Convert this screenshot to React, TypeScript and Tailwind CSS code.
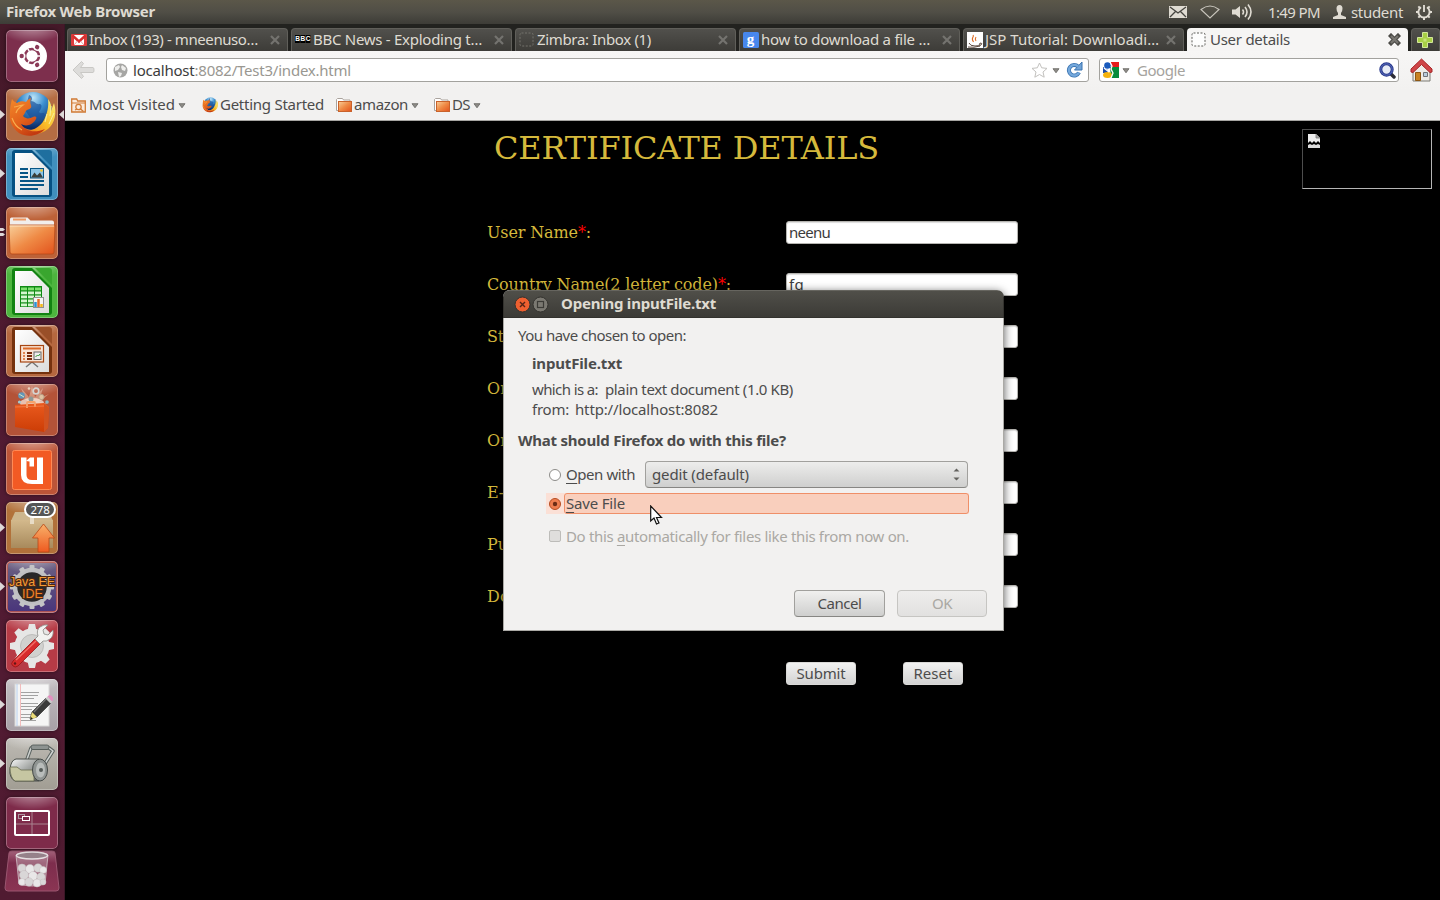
import { useLayoutEffect, useRef, useState, type ReactNode } from "react";

/** Single-line text whose tracking is adjusted so that it fills `w` pixels. */
function T({ w, className = "", children }: { w: number; className?: string; children: ReactNode }) {
  const ref = useRef<HTMLSpanElement>(null);
  const [spacing, setSpacing] = useState(0);
  useLayoutEffect(() => {
    const el = ref.current;
    if (!el) return;
    const n = (el.textContent || "").length;
    setSpacing((w - el.getBoundingClientRect().width) / n);
  }, [w]);
  return (
    <span ref={ref} className={`inline-block shrink-0 self-start whitespace-pre ${className}`} style={{ letterSpacing: spacing }}>
      {children}
    </span>
  );
}

function Tile({ className, children, left, right, dots }: { className: string; children: ReactNode; left?: boolean; right?: boolean; dots?: boolean }) {
  return (
    <div className="relative flex h-[52px] w-full shrink-0 pl-[6px]">
      <div className={`h-[52px] w-[52px] overflow-hidden rounded-[5px] shadow-[0_0_4px_rgba(0,0,0,0.5)] ${className}`}>
        <svg width="52" height="52" viewBox="0 0 52 52">
          <ellipse cx="26" cy="0" rx="30" ry="16" fill="url(#gloss)" />
          {children}
          <rect x=".5" y=".5" width="51" height="51" rx="4.5" fill="none" stroke="#fff" strokeOpacity=".28" />
        </svg>
      </div>
      {left && (
        <svg className="absolute top-[21px] left-0" width="5" height="9" viewBox="0 0 5 9"><path d="M0 0 5 4.5 0 9Z" fill="#ddd8d8" /></svg>
      )}
      {dots && (
        <svg className="absolute top-[21px] left-0" width="5" height="9" viewBox="0 0 5 9"><path d="M0 0h3l2 1.5L3 3H0ZM0 5h3l2 1.5L3 8H0Z" fill="#ddd8d8" /></svg>
      )}
      {right && (
        <svg className="absolute top-[21px] right-0" width="5" height="9" viewBox="0 0 5 9"><path d="M5 0 0 4.5 5 9Z" fill="#ddd8d8" /></svg>
      )}
    </div>
  );
}

function Defs() {
  return (
    <svg width="0" height="0" className="absolute">
      <defs>
        <radialGradient id="gloss" cx=".5" cy=".3" r=".6"><stop offset="0" stopColor="#fff" stopOpacity=".55" /><stop offset="1" stopColor="#fff" stopOpacity="0" /></radialGradient>
        <radialGradient id="globe" cx=".5" cy=".15" r=".8"><stop offset="0" stopColor="#bfe6f8" /><stop offset=".4" stopColor="#3c8fd0" /><stop offset="1" stopColor="#0b2a66" /></radialGradient>
        <linearGradient id="fox" x1="0" y1="0" x2=".6" y2="1"><stop offset="0" stopColor="#f28a2b" /><stop offset=".6" stopColor="#e2601b" /><stop offset="1" stopColor="#c23a10" /></linearGradient>
        <linearGradient id="tail" x1="1" y1="0" x2="0" y2="1"><stop offset="0" stopColor="#fdf07a" /><stop offset=".5" stopColor="#f9bd28" /><stop offset="1" stopColor="#ea6a18" /></linearGradient>
        <linearGradient id="paper" x1="0" y1="0" x2="1" y2="1"><stop offset="0" stopColor="#fff" /><stop offset="1" stopColor="#dcdcdc" /></linearGradient>
        <linearGradient id="folder" x1="0" y1="0" x2="1" y2="1"><stop offset="0" stopColor="#f8cf9a" /><stop offset=".5" stopColor="#ef8a45" /><stop offset="1" stopColor="#e2521c" /></linearGradient>
        <linearGradient id="bag" x1="0" y1="0" x2="0" y2="1"><stop offset="0" stopColor="#ea5a1e" /><stop offset="1" stopColor="#cc3d06" /></linearGradient>
        <linearGradient id="box" x1="0" y1="0" x2="0" y2="1"><stop offset="0" stopColor="#d3b98c" /><stop offset="1" stopColor="#a88a5c" /></linearGradient>
        <linearGradient id="up" x1="0" y1="0" x2="0" y2="1"><stop offset="0" stopColor="#f9b16a" /><stop offset="1" stopColor="#ee5a20" /></linearGradient>
        <linearGradient id="metal" x1="0" y1="0" x2="1" y2="1"><stop offset="0" stopColor="#fafafa" /><stop offset=".5" stopColor="#a5a8a6" /><stop offset="1" stopColor="#5c5f5d" /></linearGradient>
        <linearGradient id="trashbg" x1="0" y1="0" x2="0" y2="1"><stop offset="0" stopColor="#a5637c" /><stop offset=".3" stopColor="#7d2d4d" /><stop offset="1" stopColor="#8b3553" /></linearGradient>
      </defs>
    </svg>
  );
}

function FoxArt() {
  return (
    <g>
      <circle cx="27" cy="22" r="19" fill="url(#globe)" />
      <path d="M23 6c3 1 4 4 2 6 4 0 5 4 9 3 3 1 1 5-1 8 2 3 5-1 6 3-3 5-8 8-12 7l-8-12Z" fill="#1a4f96" opacity=".65" />
      <path d="M42 10c3 4 4 8 3 12l3-8c3 10 1 20-6 26-7 6-18 7-26 3 9-1 18-4 22-12 3-6 5-13 4-21Z" fill="url(#tail)" />
      <path d="m45 17-1 10m-3-2-2 8m9-9-5 11" stroke="#f7ef9b" strokeWidth="1" fill="none" />
      <path d="M6 10c1 2 3 3 5 4 3-2 6-2 9-1 1-2 3-3 5-4-1 3-1 5 0 7 1 3-1 4-4 5-2 1-2 4-4 6 4 4 7 2 10 1 3-1 4 0 3 2-3 6-10 8-15 5 5 8 14 9 24 5-6 7-18 9-26 4C5 38 3 31 4 23c0-5 1-9 2-13Z" fill="url(#fox)" />
      <path d="M8 18c3 0 6-2 9-2-3 2-6 4-7 8M6 29c2 6 6 10 10 12" fill="none" stroke="#f9ad4e" strokeWidth="1.2" />
    </g>
  );
}

function Doc({ dark, light, children }: { dark: string; light: string; children: ReactNode }) {
  return (
    <g>
      <path d="M6 5q0-3 3-3h17l20 20v24q0 3-3 3H9q-3 0-3-3Z" fill={dark} />
      <path d="M29 2h14q3 0 3 3v14Z" fill={light} />
      <path d="M9 5h17l17 17v25H9Z" fill="url(#paper)" />
      {children}
    </g>
  );
}

const teeth = [0, 30, 60, 90, 120, 150, 180, 210, 240, 270, 300, 330];
const bigTeeth = [0, 45, 90, 135, 180, 225, 270, 315];

function Launcher() {
  return (
    <aside className="flex w-[65px] shrink-0 flex-col gap-[7px] border-r border-[#3b1727] bg-linear-to-b from-[#451929] via-[#521b33] to-[#501b31] pt-[6px]">
      <Tile className="bg-[#7d2f4d]">
        <circle cx="26" cy="26" r="15" fill="#fff" />
        <circle cx="26" cy="26" r="7" fill="none" stroke="#8b3a58" strokeWidth="2.600" />
        {[60, 180, 300].map((a) => (
          <g key={a} transform={`rotate(${a} 26 26)`}>
            <circle cx="36" cy="26" r="3.500" fill="#fff" />
            <circle cx="36.300" cy="26" r="2.200" fill="#8b3a58" />
          </g>
        ))}
        {[0, 120, 240].map((a) => <path key={a} d="M31 26h5" stroke="#fff" strokeWidth="1.400" transform={`rotate(${a} 26 26)`} />)}
      </Tile>
      <Tile className="bg-[#b56d43]" left right><FoxArt /></Tile>
      <Tile className="bg-[#4090be]" left>
        <Doc dark="#065182" light="#1f6f9f">
          <path d="M14 21h8m-8 4h8m-8 4h8m-8 4h24m-24 4h24m-24 4h18" stroke="#085686" strokeWidth="1.8" />
          <rect x="24" y="20" width="14" height="10.500" fill="#085686" />
          <rect x="25" y="21" width="12" height="8.500" fill="#8ec5e6" />
          <path d="m25 29.500 3.500-5 2.500 3 3-3 3 5Z" fill="#3b3f3a" /><circle cx="35.500" cy="22.500" r="1.300" fill="#f3c62f" />
        </Doc>
      </Tile>
      <Tile className="bg-[#bd6238]" dots>
        <path d="M4 12q0-1.500 1.500-1.500h16l3 3H46q2 0 2 2V20H4Z" fill="#f1eeec" />
        <path d="M7 12.500h13" stroke="#ee9a65" strokeWidth="2" />
        <path d="M3 18h46l-1 27q0 2-2 2H6q-2 0-2-2Z" fill="url(#folder)" stroke="#b74a18" strokeWidth=".8" />
        <path d="M4 19h44" stroke="#fde3c4" strokeWidth="1" />
      </Tile>
      <Tile className="bg-[#4db53e]">
        <Doc dark="#128312" light="#39a62e">
          <rect x="14" y="20" width="22" height="21" fill="#0f8a14" />
          {[0, 1, 2, 3, 4].flatMap((r) => [0, 1, 2].map((c) => <rect key={`${r}-${c}`} x={15 + c * 7} y={21.500 + r * 4} width="6" height="2.800" fill={r === 0 ? "#7ee06f" : "#d5f6cf"} />))}
          <rect x="27.500" y="31.500" width="10" height="10" fill="#f5f5f5" stroke="#909090" />
          <path d="M29.500 41v-5" stroke="#2c92d6" strokeWidth="2.500" /><path d="M32.500 41v-8" stroke="#e96b26" strokeWidth="2.500" /><path d="M35.500 41v-3" stroke="#f3b918" strokeWidth="2.500" />
        </Doc>
      </Tile>
      <Tile className="bg-[#b5683f]">
        <Doc dark="#75320e" light="#994f28">
          <path d="m26 37-6 5m6-5 6 5" stroke="#777" strokeWidth="1.500" />
          <rect x="14.500" y="20.500" width="23" height="16.500" fill="#f9e4d5" stroke="#a74713" strokeWidth="1.200" />
          <path d="M17 23.500h18" stroke="#dc6b2a" strokeWidth="1.800" />
          <path d="M17 28h2m-2 3h2m-2 3h2" stroke="#e08450" strokeWidth="2" /><path d="M21 28h5m-5 3h5m-5 3h5" stroke="#7b2c0b" strokeWidth="2" />
          <rect x="28" y="27" width="7" height="7.500" fill="#eee" stroke="#666" /><path d="m29.500 32 2-2 1 1 1.500-2" stroke="#2f9a30" strokeWidth="1" fill="none" />
        </Doc>
      </Tile>
      <Tile className="bg-[#b35338]">
        <path d="M26 20 10 9l9 5-4-10 8 9 3-11 3 11 8-9-3 10 9-4-10 8 10 2Z" fill="#ffe5d3" opacity=".4" />
        <ellipse cx="26" cy="19" rx="12" ry="5" fill="#fff0e2" opacity=".7" />
        <circle cx="15.500" cy="11.500" r="3.300" fill="#6397b8" /><path d="m13 10 5 3" stroke="#d4e4c3" />
        <circle cx="30" cy="7" r="2.800" fill="none" stroke="#d5d5d2" strokeWidth="1.700" />
        <circle cx="25" cy="15" r="2.500" fill="#8f9996" /><circle cx="35.500" cy="13" r="2.600" fill="#e0c3a2" stroke="#b9a188" />
        <circle cx="41" cy="18" r="1.800" fill="#8cb5bf" /><circle cx="13.500" cy="18" r="1.600" fill="#a3cbd1" /><circle cx="23" cy="4.500" r="1.300" fill="#e9d1bd" />
        <path d="m9 21 29-2 5 4-1 21-4 4-29-5Z" fill="url(#bag)" /><path d="m38 20 5 4-1 20-4 4Z" fill="#d2521f" />
        <path d="M21 24v-5q0-1 1-1h6q1 0 1 1v4" fill="none" stroke="#f4a26b" strokeWidth="1.800" />
        <path d="m9 23 29-1" stroke="#f28350" strokeWidth=".8" />
      </Tile>
      <Tile className="bg-[#bc5538]">
        <rect x="6.500" y="7.500" width="39" height="39" rx="2" fill="#f25a24" stroke="#ff8a56" />
        <path d="M15 14.500h5.500v17.500q0 5 5.500 5h5V14.500h6v26.500H26q-11 0-11-9Z" fill="#fff" />
        <path d="m20 18 4-3.500h4v9h-4.500V18.500Z" fill="#fff" />
      </Tile>
      <div className="relative">
        <Tile className="bg-[#b1713a]" left>
          <path d="m9 10 34 0 4 9H5Z" fill="#cdb68e" /><path d="M5 18h42v28H5Z" fill="url(#box)" />
          <path d="M24 10h4v12h-4Z" fill="#e8dcc6" />
          <path d="m37.500 22 11 14h-5.500v14h-11V36h-5.500Z" fill="url(#up)" stroke="#b94718" strokeWidth=".8" />
        </Tile>
        <div className="absolute -top-[1px] left-[24px] flex h-[17px] w-[32px] items-start justify-center rounded-full border-2 border-white bg-[#555] font-['Noto_Sans'] text-[11.5px] leading-[13px] text-white">
          <T w={19}>278</T>
        </div>
      </div>
      <Tile className="bg-linear-to-b from-[#6c6181] to-[#49347b]" left>
        <rect x="1" y="1" width="50" height="50" rx="4" fill="none" stroke="#ca5c49" strokeWidth="1.500" />
        <circle cx="26" cy="26" r="17" fill="#282728" stroke="#bfbfc2" strokeWidth="4.500" />
        {teeth.map((a) => <rect key={a} x="23.500" y="4" width="5" height="5" rx="1" fill="#c4c4c6" transform={`rotate(${a} 26 26)`} />)}
        <text x="3" y="24.500" textLength="46" lengthAdjust="spacingAndGlyphs" fontSize="13" fontFamily="Liberation Sans" fill="#f49b36" stroke="#4b2813" strokeWidth="2" paintOrder="stroke">Java EE</text>
        <text x="16" y="37" textLength="21" lengthAdjust="spacingAndGlyphs" fontSize="13" fontFamily="Liberation Sans" fill="#f0832a" stroke="#4b2813" strokeWidth="2" paintOrder="stroke">IDE</text>
      </Tile>
      <Tile className="bg-[#b63b46]">
        {bigTeeth.map((a) => <path key={a} d="m21.500 11 1.500-7h6l1.500 7Z" fill="#e6e6e5" transform={`rotate(${a} 26 26)`} />)}
        <circle cx="26" cy="26" r="14" fill="none" stroke="#e6e6e5" strokeWidth="7" />
        <circle cx="26" cy="26" r="11.500" fill="#d1d1cf" stroke="#b5b5b3" strokeWidth=".8" />
        <path d="M7 46q-3-2 0-5l22-22 5 5-22 22q-3 2-5 0Z" fill="#d72b2c" stroke="#961516" strokeWidth=".8" />
        <path d="m10 40 20-19" stroke="#f16f67" strokeWidth="1.400" />
        <path d="m29 19 3-3q-2-6 2-9t8-2l-5 5 1 4 4 1 5-5q1 6-3 9t-7 2l-3 3Z" fill="#f2f2f0" stroke="#8b8b88" strokeWidth=".8" />
        <circle cx="9" cy="43.500" r="1.200" fill="#631616" />
      </Tile>
      <Tile className="bg-linear-to-b from-[#c3bec2] to-[#a7a0a6]" left>
        <rect x="9" y="5" width="34" height="42" fill="#f5f5f5" stroke="#d7d7d7" />
        <path d="M14.500 5v42" stroke="#f1adad" strokeWidth=".8" /><path d="M11 5v42" stroke="#a8c6ed" strokeWidth=".8" />
        <path d="M15 13.500h18m-18 3h17m-17 3h13m-13 5h17m-17 3h16m-16 3h11m-11 5h14m-14 3h10m-10 3h15" stroke="#999" strokeWidth=".9" />
        <path d="m24 40 2-7 14-14 5 5-14 14Z" fill="#3a3a3a" stroke="#222" strokeWidth=".6" /><path d="m28 33 12-13" stroke="#777" strokeWidth="1.200" />
        <path d="m24 41 2-8 5 5Z" fill="#eadb76" /><path d="m24 41 1-3 2 2Z" fill="#222" />
        <path d="m39.500 19.500 2-2 5 5-2 2Z" fill="#c9c9c9" /><path d="m41.500 17.500 2-1.500q4 1 3.500 5l-1 1.500Z" fill="#e48fc0" />
      </Tile>
      <Tile className="bg-linear-to-b from-[#bdbab4] to-[#a19d93]" left>
        <path d="m20 24 5-14h18l4 3-12 19" fill="none" stroke="#59615f" strokeWidth="3.500" strokeLinejoin="round" /><path d="m20 24 5-14h18l4 3-12 19" fill="none" stroke="#cfd2d0" strokeWidth="1.500" strokeLinejoin="round" />
        <rect x="25" y="7" width="18" height="4.500" rx="2" fill="#8d9391" stroke="#4d5452" strokeWidth=".8" />
        <path d="M10 21h23v22H9q-6-3-5-12 1-9 6-10Z" fill="url(#metal)" stroke="#4a4e4a" />
        <path d="M4 29h7l4 3h13v11H9q-5-3-5-14Z" fill="#c6c6a2" stroke="#676a50" strokeWidth=".8" />
        <ellipse cx="34" cy="32" rx="7.500" ry="11" fill="#8f9492" stroke="#444947" /><ellipse cx="34.500" cy="32" rx="4.500" ry="7.500" fill="#b9bdbb" /><circle cx="35" cy="32" r="2" fill="#555b58" />
      </Tile>
      <Tile className="bg-[#7e2b4a]">
        <path d="M26 14v23M9 27h34" stroke="#a9848f" strokeWidth="1" />
        <rect x="9" y="14" width="34" height="24" rx="1" fill="none" stroke="#fff" strokeWidth="2" />
        <rect x="12.500" y="17.500" width="6" height="4" fill="none" stroke="#b09aa4" /><rect x="16.500" y="19.500" width="7" height="4" fill="#7e2b4a" stroke="#fff" />
      </Tile>
      <svg className="mt-[-6px] ml-[4px] shrink-0" width="56" height="42" viewBox="0 0 56 42">
        <path d="M5 3q0-2 3-2h40q3 0 3 2l4 35q0 3-3 3H4q-3 0-3-3Z" fill="url(#trashbg)" stroke="#9a5670" />
        <path d="m12 5 3 29q13 4 26 0l3-29Z" fill="#eee" fillOpacity=".3" stroke="#d3c5ca" strokeWidth=".8" />
        {[[18, 18, 4], [26, 19, 4.5], [34, 18, 4.2], [39, 20, 3.5], [20, 25, 4.5], [29, 26, 4.5], [37, 27, 4.2], [18, 32, 3.5], [25, 32, 4.2], [33, 33, 4], [39, 32, 3]].map(([x, y, r], i) => (
          <circle key={i} cx={x} cy={y} r={r} fill={i % 2 ? "#e9e7e8" : "#d9d6d7"} stroke="#c4bfc1" strokeWidth=".5" />
        ))}
        <ellipse cx="28" cy="5.500" rx="15.500" ry="3.500" fill="#96818a" stroke="#e6dfe2" strokeWidth="1.400" />
      </svg>
    </aside>
  );
}

function Cross({ bold }: { bold?: boolean }) {
  return bold ? (
    <svg width="13" height="13" viewBox="0 0 13 13"><path d="m3 3 7 7m0-7-7 7" stroke="#4b4a46" strokeWidth="4.400" strokeLinecap="square" /><path d="m3 3 7 7m0-7-7 7" stroke="#777570" strokeWidth="2.200" /></svg>
  ) : (
    <svg width="12" height="12" viewBox="0 0 12 12"><path d="m2 2 8 8m0-8-8 8" stroke="#74736f" strokeWidth="2.200" /></svg>
  );
}

function Tab({ icon, title, w, active }: { icon: ReactNode; title: string; w: number; active?: boolean }) {
  return (
    <div className={`flex h-[23px] w-[221px] shrink-0 items-center rounded-t-[4px] pb-[1px] ${active ? "bg-[#f6f5f4] pr-[7px] pl-[4px] text-[#4c4c4c]" : "border-x border-t border-[#605f5a] bg-linear-to-b from-[#51504c] to-[#3d3c38] pr-[6px] pl-[3px] text-[#dfdbd2]"}`}>
      <div className="flex w-[19px] shrink-0 items-center">{icon}</div>
      <div className={active ? "flex-1 pt-[1px]" : "-ml-[1px] flex-1"}><T w={w} className="leading-[20px]">{title}</T></div>
      <Cross bold={active} />
    </div>
  );
}

function Caret() {
  return <svg width="8" height="6" viewBox="0 0 8 6" className="mt-[2px] shrink-0"><path d="M1 .700h6L4 4.800Z" fill="#8d8b87" stroke="#64635f" strokeWidth=".8" /></svg>;
}

function FolderIcon() {
  return (
    <svg width="16" height="14" viewBox="0 0 16 14"><path d="M.500 12.500v-11l1-1h5l1 1.500H14v11Z" fill="#fff" stroke="#aaa39d" /><rect x="2.500" y="3.500" width="13" height="10" fill="url(#folder)" stroke="#c9622b" /></svg>
  );
}

function TopPanel() {
  return (
    <header className="flex h-[24px] shrink-0 items-center bg-linear-to-b from-[#5b5749] via-[#504e46] to-[#3d3c37] pr-[7px] pb-[2px] pl-[6px] text-[#dfdbd2]">
      <T w={149} className="pt-[1px] font-bold leading-[20px]">Firefox Web Browser</T>
      <div className="ml-auto flex items-center pt-[2px]">
        <svg width="18" height="12" viewBox="0 0 18 12"><rect width="18" height="12" fill="#dfdbd2" /><path d="m1 1 8 6 8-6M1 11l5.500-5.500M17 11l-5.500-5.500" fill="none" stroke="#45443f" strokeWidth="1.300" /></svg>
        <svg className="ml-[13px]" width="20" height="14" viewBox="0 0 20 14"><path d="M1 4.500q9-7 18 0L10 13Z" fill="none" stroke="#c9c6bd" strokeWidth="1.100" /></svg>
        <svg className="ml-[12px]" width="20" height="16" viewBox="0 0 20 16"><path d="M0 5.500h3.500L8 2v12l-4.500-3.500H0Z" fill="#dfdbd2" /><path d="M10.500 5.500q2 2.500 0 5M13 3q4 5 0 10M16 .500q6 7.500 0 15" fill="none" stroke="#dfdbd2" strokeWidth="1.600" /></svg>
        <T w={52} className="ml-[16px] leading-[20px]">1:49 PM</T>
        <svg className="ml-[13px]" width="13" height="14" viewBox="0 0 13 14"><path d="M3.500 3.500q0-3.500 3-3.500t3 3.500q0 3-1.500 4.500v2l5 2V14H0v-2l5-2V8Q3.500 6.500 3.500 3.500Z" fill="#dfdbd2" /></svg>
        <T w={52} className="ml-[5px] leading-[20px]">student</T>
        <svg className="ml-[12px]" width="18" height="18" viewBox="0 0 18 18">
          <path d="M6 4.200a5.600 5.600 0 1 0 6 0M9 2v7" fill="none" stroke="#dfdbd2" strokeWidth="1.900" />
          {[45, 90, 135, 180, 225, 270, 315].map((a) => <path key={a} d="M9 1v3" stroke="#dfdbd2" strokeWidth="2" transform={`rotate(${a} 9 9)`} />)}
        </svg>
      </div>
    </header>
  );
}

function BrowserChrome() {
  return (
    <div className="flex shrink-0 flex-col">
      <div className="flex h-[27px] items-end gap-[3px] bg-[#22221f] pl-[2px]">
        <Tab w={169} title="Inbox (193) - mneenuso…" icon={<svg width="16" height="12" viewBox="0 0 16 12"><rect width="16" height="12" rx="1" fill="#dc3b3b" /><path d="M3 1h10v10H3Z" fill="#fff" /><path d="m1.500 1.500 6.500 6 6.500-6" fill="none" stroke="#d93030" strokeWidth="2.400" /><path d="m3 11 3.500-4M13 11 9.500 7" stroke="#e5a0a0" /></svg>} />
        <Tab w={169} title="BBC News - Exploding t…" icon={<svg className="-mt-[2px]" width="16" height="8" viewBox="0 0 16 8"><rect width="4.800" height="8" fill="#000" /><rect x="5.300" width="4.800" height="8" fill="#000" /><rect x="10.600" width="4.800" height="8" fill="#000" /><g fontFamily="Liberation Sans" fontWeight="bold" fontSize="6.500" fill="#fff"><text x=".2" y="6.300">B</text><text x="5.500" y="6.300">B</text><text x="10.800" y="6.300">C</text></g></svg>} />
        <Tab w={114} title="Zimbra: Inbox (1)" icon={<svg width="15" height="15" viewBox="0 0 15 15"><rect x="1" y="1" width="13" height="13" rx="1.500" fill="none" stroke="#74736c" strokeDasharray="2 1.500" /></svg>} />
        <Tab w={169} title="how to download a file …" icon={<svg width="16" height="16" viewBox="0 0 16 16"><rect width="16" height="16" rx="1.500" fill="#4787ed" /><text x="3.800" y="11.500" fontFamily="Liberation Serif" fontWeight="bold" fontSize="15" fill="#fff">g</text></svg>} />
        <Tab w={174} title="JSP Tutorial: Downloadi…" icon={<svg width="16" height="16" viewBox="0 0 16 16"><rect width="16" height="16" fill="#fff" /><path d="M6.500 10q-2-3-.5-5 .8-1 0-2m3 6q-1.500-2 0-4" fill="none" stroke="#dc6b22" strokeWidth="1.100" /><path d="M2 11q1 3 6 3t5-3m0 0q3 0 1 2l-2 1M1 15q6 1 12-1" fill="none" stroke="#5c4a40" strokeWidth="1" /></svg>} />
        <Tab active w={80} title="User details" icon={<svg width="15" height="15" viewBox="0 0 15 15"><rect x="1" y="1" width="13" height="13" rx="1.500" fill="#fdfdfd" stroke="#5d5c58" strokeDasharray="2 1.500" /></svg>} />
        <div className="flex h-[23px] flex-1 items-center justify-center rounded-t-[4px] border-x border-t border-[#605f5a] bg-linear-to-b from-[#51504c] to-[#3d3c38] pr-[2px] pb-[1px]">
          <svg className="shrink-0" width="16" height="16" viewBox="0 0 16 16"><path d="M5.500.500h5v5h5v5h-5v5h-5v-5h-5v-5h5Z" fill="#a8cf45" stroke="#d3e79a" /><path d="M6.500 8h3" stroke="#c9e27c" strokeWidth="3" /></svg>
        </div>
      </div>
      <div className="flex h-[39px] items-center bg-linear-to-b from-[#f7f6f5] to-[#f2f1f0] pr-[7px] pb-[1px] pl-[6px]">
        <svg width="24" height="20" viewBox="0 0 24 20"><path d="M2 10 10.500 1.500l2 2-3 4H22q1 0 1 2.500t-1 2.500H9.500l3 4-2 2Z" fill="#dddcda" stroke="#c9c8c5" /></svg>
        <div className="ml-[11px] flex h-[24px] w-[983px] items-center rounded-[3px] border border-[#a3a29e] bg-white pr-[5px] pl-[6px] text-[#999791]">
          <svg width="15" height="15" viewBox="0 0 15 15"><circle cx="7.500" cy="7.500" r="7" fill="#a6a6a4" /><path d="m2 4 4-2 1 2-2 3-3 1ZM9 2l4 3-1 3-3-1-1-3ZM5 9l4 1-1 3-2 1Z" fill="#eeeeec" /></svg>
          <T w={61.500} className="ml-[5px] leading-[22px] text-[#3c3c3c]">localhost</T>
          <T w={156.500} className="leading-[22px]">:8082/Test3/index.html</T>
          <svg className="ml-auto" width="17" height="16" viewBox="0 0 17 16"><path d="m8.500 1 2.200 4.800 5.300.6-4 3.600 1.200 5.200-4.700-2.700-4.700 2.700L5 10 1 6.400l5.300-.6Z" fill="#fff" stroke="#c2c1be" /></svg>
          <div className="ml-[4px]"><Caret /></div>
          <svg className="ml-[6px]" width="17" height="16" viewBox="0 0 17 16"><path d="M13 10.500a5.300 5.300 0 1 1-1-6" fill="none" stroke="#3b74b1" strokeWidth="4" /><path d="M16 0v8H8.500Z" fill="#72a4d7" stroke="#3b74b1" /><path d="M13 10.500a5.300 5.300 0 1 1-1-6" fill="none" stroke="#74a8dc" strokeWidth="2.400" /></svg>
        </div>
        <div className="ml-[10px] flex h-[24px] w-[300px] items-center rounded-[3px] border border-[#a3a29e] bg-white pr-[2px] pl-[3px] text-[#a5a39e]">
          <svg width="16" height="16" viewBox="0 0 16 16"><path d="M8 0h8v5H8Z" fill="#e71b1b" /><path d="M7 5h9v11H8Z" fill="#078c3b" /><circle cx="4.500" cy="3.500" r="3.300" fill="#185abd" /><path d="M0 5q6 2 5 6H0Z" fill="#1c4ca8" /><ellipse cx="4.500" cy="13" rx="4.500" ry="3" fill="#f5b20c" /><path d="m7 0 2 4-1 3 2 4-2 5M1 6l5 4" stroke="#fff" strokeWidth="1.300" fill="none" /></svg>
          <div className="ml-[3px]"><Caret /></div>
          <T w={48} className="ml-[7px] leading-[22px]">Google</T>
          <svg className="ml-auto" width="17" height="17" viewBox="0 0 17 17"><path d="m11 11 4 4" stroke="#2e2e36" strokeWidth="3.500" strokeLinecap="round" /><circle cx="7.500" cy="7.500" r="5.700" fill="#e7ecf6" stroke="#28388c" strokeWidth="3" /><circle cx="7.500" cy="7.500" r="5.700" fill="none" stroke="#5d70be" strokeWidth="1" /></svg>
        </div>
        <svg className="ml-auto" width="23" height="24" viewBox="0 0 23 24"><path d="M3 12v11h17V12l-8.500-8Z" fill="#eeece7" stroke="#7d7b75" /><path d="M5.500 14.500h5v8h-5Z" fill="#c88222" stroke="#8d5713" /><path d="M13.500 14.500h4v4h-4Z" fill="#b9cddd" stroke="#6e7378" /><path d="M11.500 1 1 11v3l2 .5 8.500-8 8.500 8 2-.5v-3Z" fill="#cf4547" stroke="#a72527" /></svg>
      </div>
      <div className="flex h-[31px] items-center border-b border-[#a6a5a2] bg-[#f2f1f0] pl-[6px] text-[#4c4c4c]">
        <svg width="15" height="15" viewBox="0 0 15 15"><path d="M.7 14V1h5l1 2h7.600v11Z" fill="#fbeadb" stroke="#d07a35" strokeWidth="1.300" /><path d="M1 5h13" stroke="#d07a35" /><circle cx="7.500" cy="9" r="2.700" fill="none" stroke="#d07a35" strokeWidth="1.300" /><path d="m9.500 11 3 2.500M4 12l2-1" stroke="#d07a35" strokeWidth="1.300" /></svg>
        <T w={86} className="ml-[3px] leading-[28px]">Most Visited</T>
        <div className="ml-[3px]"><Caret /></div>
        <svg className="ml-[16px]" width="16" height="16" viewBox="2 2 47 47"><FoxArt /></svg>
        <T w={104} className="ml-[2px] leading-[28px]">Getting Started</T>
        <div className="ml-[12px]"><FolderIcon /></div>
        <T w={54} className="ml-[2px] leading-[28px]">amazon</T>
        <div className="ml-[3px]"><Caret /></div>
        <div className="ml-[15px]"><FolderIcon /></div>
        <T w={18} className="ml-[2px] leading-[28px]">DS</T>
        <div className="ml-[3px]"><Caret /></div>
      </div>
    </div>
  );
}

function Field({ label, w, required, value, vw }: { label: string; w: number; required?: boolean; value?: string; vw?: number }) {
  return (
    <div className="flex h-[23px] items-center">
      <div className="w-[299px] font-['DejaVu_Serif'] text-[16px] leading-[20px] text-[#d5b93c]">
        <T w={w}>{label}{required && <><span className="text-[#f00]">*</span>:</>}</T>
      </div>
      <div className="flex h-[23px] w-[232px] items-center rounded-[3px] border border-[#b5b4b0] bg-white pl-[2px] text-[#3c3c3c] shadow-[inset_0_1px_1px_#ddd]">
        {value && vw && <T w={vw} className="leading-[20px]">{value}</T>}
      </div>
    </div>
  );
}

function Page() {
  return (
    <main className="flex flex-1 justify-between bg-black pr-[8px] pl-[422px]">
      <div className="flex flex-col">
        <h1 className="ml-[7px] h-[100px] pt-[7px] font-['DejaVu_Serif'] text-[32px] leading-[40px] text-[#d5b93c]"><T w={385}>CERTIFICATE DETAILS</T></h1>
        <div className="flex flex-col gap-[29px]">
          <Field label="User Name" w={104} required value="neenu" vw={41} />
          <Field label="Country Name(2 letter code)" w={244} required value="fq" vw={15} />
          <Field label="St" w={17} />
          <Field label="Or" w={21} />
          <Field label="Or" w={21} />
          <Field label="E-" w={17} />
          <Field label="Pu" w={21} />
          <Field label="Do" w={23} />
        </div>
        <div className="mt-[54px] ml-[299px] flex gap-[47px] text-[#4c4c4c]">
          <button className="flex h-[23px] w-[70px] items-center justify-center rounded-[3px] border border-[#dad9d7] bg-linear-to-b from-[#f2f2f1] to-[#d3d3d3]"><T w={49} className="leading-[20px]">Submit</T></button>
          <button className="flex h-[23px] w-[60px] items-center justify-center rounded-[3px] border border-[#dad9d7] bg-linear-to-b from-[#f2f2f1] to-[#d3d3d3]"><T w={39} className="leading-[20px]">Reset</T></button>
        </div>
      </div>
      <div className="mt-[8px] h-[60px] w-[130px] border border-t-[#4d4d4d] border-r-[#b5b5b5] border-b-[#b5b5b5] border-l-[#4d4d4d] pt-[4px] pl-[5px]">
        <svg width="12" height="14" viewBox="0 0 12 14"><path d="M0 0h8l4 4v5l-2-2-2 2-2-2-2 2-2-2-2 2Z" fill="#eee" /><path d="M8 0v4h4" fill="#aaa" stroke="#777" strokeWidth=".8" /><path d="M0 11l2-1 2 1 2-1 2 1 2-1 2 1v3H0Z" fill="#ddd" /></svg>
      </div>
    </main>
  );
}

function OpeningDialog() {
  return (
    <section className="absolute top-[290px] left-[503px] flex h-[341px] w-[501px] flex-col overflow-hidden rounded-t-[7px] bg-[#f2f1f0] text-[#4c4c4c] shadow-[0_2px_10px_rgba(0,0,0,0.65)]">
      <div className="flex h-[28px] shrink-0 items-center border border-[#33322e] border-t-[#66655f] bg-linear-to-b from-[#504f49] to-[#3c3b37] pl-[10px] text-[#dfdbd2]">
        <svg width="37" height="18" viewBox="0 0 37 18">
          <circle cx="8.500" cy="9.500" r="7.500" fill="#ee6030" stroke="#34332f" /><path d="m6 7 5 5m0-5-5 5" stroke="#542416" strokeWidth="1.400" />
          <circle cx="26.500" cy="9.500" r="7.500" fill="#7b7972" stroke="#34332f" /><rect x="23.500" y="6.500" width="6" height="6" fill="none" stroke="#3c3b37" strokeWidth="1.200" />
        </svg>
        <T w={155} className="ml-[10px] pt-[2px] font-bold leading-[20px]">Opening inputFile.txt</T>
      </div>
      <div className="flex flex-1 flex-col border-x border-b border-[#aaa9a5] pt-[7px] pl-[14px]">
        <T w={168} className="leading-[20px]">You have chosen to open:</T>
        <div className="mt-[8px] ml-[14px] flex flex-col items-start">
          <T w={90} className="font-bold leading-[20px]">inputFile.txt</T>
          <div className="mt-[6px] flex gap-[7px] leading-[20px]"><T w={66}>which is a:</T><T w={188}>plain text document (1.0 KB)</T></div>
          <div className="flex gap-[6px] leading-[20px]"><T w={37}>from:</T><T w={143}>http://localhost:8082</T></div>
        </div>
        <div className="mt-[11px] flex"><T w={268} className="font-bold leading-[20px]">What should Firefox do with this file?</T></div>
        <div className="mt-[11px] ml-[31px] flex h-[27px] items-center">
          <svg width="12" height="12" viewBox="0 0 12 12"><circle cx="6" cy="6" r="5.500" fill="#fff" stroke="#8c8b88" /></svg>
          <T w={69} className="ml-[5px] pt-[3px] leading-[20px]"><span className="underline underline-offset-[3px]">O</span>pen with</T>
          <div className="ml-[10px] flex h-[27px] w-[323px] items-center justify-between rounded-[4px] border border-[#a1a09d] border-b-[#878683] bg-linear-to-b from-[#ededec] to-[#cfcfce] pr-[7px] pl-[6px]">
            <T w={97} className="pt-[2px] leading-[20px]">gedit (default)</T>
            <svg width="7" height="13" viewBox="0 0 7 13"><path d="M.500 3.500h6l-3-3ZM.500 9.500h6l-3 3Z" fill="#62615d" /></svg>
          </div>
        </div>
        <div className="mt-[5px] ml-[28px] flex h-[21px] w-[423px] items-center bg-[#fbe0d6] pl-[3px]">
          <svg className="shrink-0" width="12" height="12" viewBox="0 0 12 12"><circle cx="6" cy="6" r="5.500" fill="#ee7e50" stroke="#b64c22" /><circle cx="6" cy="6" r="2.200" fill="#6c2d16" /></svg>
          <div className="ml-[3px] flex h-[21px] w-[405px] items-center rounded-[3px] border border-[#ef8f68] bg-[#f9cfbd] pl-[1px]">
            <T w={59} className="-mt-[1px] leading-[20px]"><span className="underline underline-offset-[3px]">S</span>ave File</T>
          </div>
        </div>
        <div className="mt-[12px] ml-[31px] flex items-center text-[#aaa8a3]">
          <svg width="12" height="12" viewBox="0 0 12 12"><rect x=".5" y=".5" width="11" height="11" rx="1.500" fill="#dfdedc" stroke="#bdbcb9" /></svg>
          <T w={343} className="ml-[5px] leading-[20px]">Do this <span className="underline underline-offset-[3px]">a</span>utomatically for files like this from now on.</T>
        </div>
        <div className="mt-auto mr-[16px] mb-[13px] flex justify-end gap-[12px]">
          <button className="flex h-[27px] w-[91px] items-center justify-center rounded-[4px] border border-[#a1a09d] border-b-[#878683] bg-linear-to-b from-[#f0f0ef] to-[#cfcfce]"><T w={44} className="pt-[2px] leading-[20px]">Cancel</T></button>
          <button className="flex h-[27px] w-[90px] items-center justify-center rounded-[4px] border border-[#c6c5c2] bg-linear-to-b from-[#eeedec] to-[#e2e1e0] text-[#aaa8a3]"><T w={20} className="pt-[2px] leading-[20px]">OK</T></button>
        </div>
      </div>
    </section>
  );
}

export default function App() {
  return (
    <div className="relative flex h-[900px] w-[1440px] flex-col overflow-hidden bg-black font-['Noto_Sans',sans-serif] text-[15px]">
      <Defs />
      <TopPanel />
      <div className="flex min-h-0 flex-1">
        <Launcher />
        <div className="flex min-w-0 flex-1 flex-col">
          <BrowserChrome />
          <Page />
        </div>
      </div>
      <OpeningDialog />
      <svg className="absolute top-[505px] left-[650px]" width="13" height="20" viewBox="0 0 13 20"><path d="M.7 1v15l3.300-3 2.500 6 2.500-1-2.500-5.500h5Z" fill="#fff" stroke="#111" strokeWidth="1.200" /></svg>
    </div>
  );
}
